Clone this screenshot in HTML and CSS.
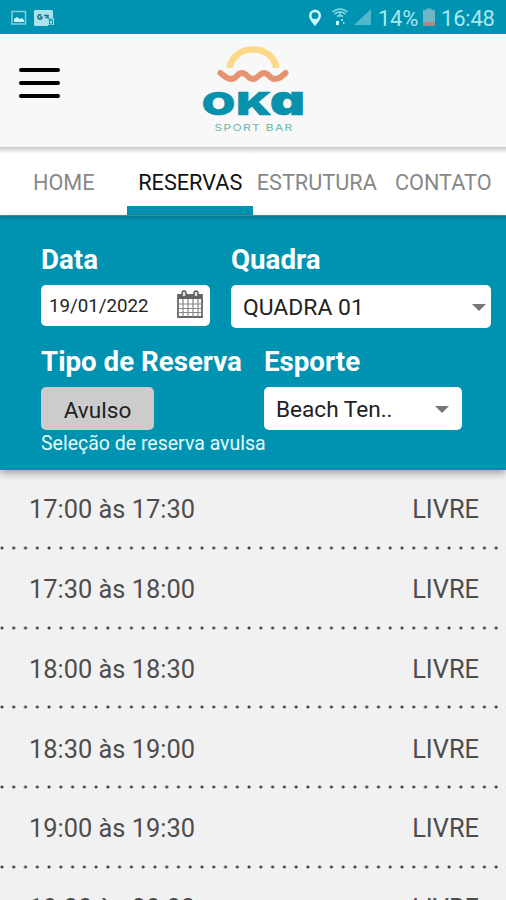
FILE: index.html
```
<!DOCTYPE html>
<html lang="pt-BR">
  <head>
    <meta charset="UTF-8">
    <meta name="viewport" content="width=device-width, initial-scale=1">
    <title>OKA Sport Bar - Reservas</title>
    <link rel="stylesheet" href="styles.css">
  </head>

  <body>
    <div class="status-bar">
      <svg class="status-left" width="60" height="34" viewBox="0 0 60 34">
        <rect x="12" y="11.5" width="13.5" height="12.5" fill="none" stroke="#7fd0dc" stroke-width="1.5"/>
        <path d="M14 22v-3l3-2 3 2 2-1 2 2v2z" fill="#c8f4f8"/>
        <path d="M35 10h17l1 1v7h1v7h-6v1H35l-1-1V11z" fill="#a9e3ec"/>
        <path d="M41.5 15.3a2.2 2.2 0 1 0 .3 3v-1.2h-2M44 15.5h4v2h-2.500" fill="none" stroke="#17718c" stroke-width="1.5"/>
        <path d="M48 19h5M49.500 20.500h3v3.500h-3z" fill="none" stroke="#0093b1" stroke-width="1"/>
      </svg>
      <svg class="status-right" width="68" height="34" viewBox="0 0 68 34">
        <path fill-rule="evenodd" d="M10 9.500a6 6 0 0 0-6 6c0 4.200 6 10.500 6 10.500s6-6.300 6-10.500a6 6 0 0 0-6-6zm0 2.800a3.400 3.400 0 1 1 0 6.800 3.400 3.400 0 0 1 0-6.800z" fill="#c8f8fc"/>
        <path d="M27.500 12q7.500-6 15 0M29.500 14q5.500-4 11 0M32 16.500q3-2 6 0" fill="none" stroke="#8cd9e3" stroke-width="1.600"/>
        <path d="M35 11v6" stroke="#8cd9e3" stroke-width="1.500"/>
        <path d="M31 21h3v4h-3z" fill="#c8f8fc"/>
        <path d="M36 19h2v2h-2zM38 22h1.500v2H38z" fill="#8cd9e3"/>
        <path d="M66 9v16H49z" fill="#4fb8cd"/>
      </svg>
      <span class="battery-value">14%</span>
      <svg class="battery" width="12" height="34" viewBox="0 0 12 34">
        <path d="M3.500 8.500h5V10H12v15.500H0V10h3.500z" fill="#70b7c5"/>
        <path d="M0 22h12v3.500H0z" fill="#b98580"/>
      </svg>
      <span class="clock">16:48</span>
    </div>

    <header class="header">
      <button class="menu-btn" aria-label="Menu">
        <span></span>
        <span></span>
        <span></span>
      </button>
      <svg class="logo" width="110" height="96" viewBox="198 42 110 96">
        <path d="M229.500 68c2-11 11-18.500 23.500-18.500S274.500 57 276.500 68" fill="none" stroke="#fcd988" stroke-width="6.500"/>
        <path d="M220.500 73c5 4 7 6 10.500 6 6 0 6-6 11-6s6 6 11 6 6-6 11-6 5 6 11 6c4 0 6-2 10.500-6" fill="none" stroke="#e59370" stroke-width="6" stroke-linecap="round"/>
        <g class="logo-name">
          <text x="202" y="115" textLength="33" lengthAdjust="spacingAndGlyphs">O</text>
          <text x="236.500" y="115" textLength="35" lengthAdjust="spacingAndGlyphs">K</text>
          <text class="logo-a" x="270" y="115" textLength="35" lengthAdjust="spacingAndGlyphs">a</text>
        </g>
        <text class="logo-sub" x="214.500" y="131" textLength="79" lengthAdjust="spacingAndGlyphs">SPORT BAR</text>
      </svg>
    </header>

    <nav class="tabs">
      <a>HOME</a>
      <a class="active">RESERVAS</a>
      <a>ESTRUTURA</a>
      <a>CONTATO</a>
    </nav>

    <form class="filtros">
      <div class="linha">
        <div class="campo campo-data">
          <label>Data</label>
          <div class="box box-data">
            <span>19/01/2022</span>
            <svg width="26" height="28" viewBox="0 0 26 28">
              <path d="M1 5h24v22H1z" fill="#fff" stroke="#666" stroke-width="1.800"/>
              <path d="M1 5h24v4H1z" fill="#666"/>
              <path d="M6 9v18M11 9v18M16 9v18M21 9v18M1 14h24M1 18.500h24M1 22.500h24" stroke="#888" stroke-width="1.200"/>
              <path d="M5 7V3q0-2 2-2t2 2v4zM17 7V3q0-2 2-2t2 2v4z" fill="#ddd" stroke="#555" stroke-width="1.300"/>
            </svg>
          </div>
        </div>
        <div class="campo campo-quadra">
          <label>Quadra</label>
          <div class="box box-quadra"><span>QUADRA 01</span><i class="seta"></i></div>
        </div>
      </div>
      <div class="linha linha-tipo">
        <div class="campo campo-tipo">
          <label>Tipo de Reserva</label>
          <div class="box box-tipo"><span>Avulso</span></div>
        </div>
        <div class="campo campo-esporte">
          <label>Esporte</label>
          <div class="box box-esporte"><span>Beach Ten..</span><i class="seta"></i></div>
        </div>
      </div>
      <p class="ajuda">Seleção de reserva avulsa</p>
    </form>

    <ul class="horarios">
      <li><span>17:00 às 17:30</span><span>LIVRE</span></li>
      <li><span>17:30 às 18:00</span><span>LIVRE</span></li>
      <li><span>18:00 às 18:30</span><span>LIVRE</span></li>
      <li><span>18:30 às 19:00</span><span>LIVRE</span></li>
      <li><span>19:00 às 19:30</span><span>LIVRE</span></li>
      <li><span>19:30 às 20:00</span><span>LIVRE</span></li>
    </ul>
  </body>
</html>
```
FILE: styles.css
```
* {
  box-sizing: border-box;
}

body {
  margin: 0;
  height: 900px;
  overflow: hidden;
  display: flex;
  flex-direction: column;
  background: #f1f1f1;
  font-family: Roboto, sans-serif;
}

.status-bar {
  flex: none;
  height: 34px;
  display: flex;
  align-items: center;
  background: #0093b1;
  color: #a5e8f0;
  font-size: 22px;
}

.status-right {
  margin-left: auto;
}

.battery-value {
  width: 45px;
  margin-left: 5px;
  padding-top: 3px;
  letter-spacing: -0.3px;
}

.clock {
  width: 61px;
  margin-left: 6px;
  margin-right: 4px;
  padding-top: 3px;
  letter-spacing: -0.2px;
}

.battery {
  flex: none;
}

.header {
  flex: none;
  height: 113px;
  display: grid;
  grid-template-columns: 1fr 110px 1fr;
  align-items: start;
  background: #f8f8f8;
}

.menu-btn {
  width: 41px;
  height: 30px;
  margin: 34px 0 0 19px;
  padding: 0;
  border: 0;
  background: none;
  display: flex;
  flex-direction: column;
  justify-content: space-between;
}

.menu-btn span {
  height: 4px;
  border-radius: 2px;
  background: #000;
}

.logo {
  margin-top: 8px;
}

.logo-name {
  font-family: Inter, sans-serif;
  font-size: 32px;
  font-weight: 900;
  fill: #0891ab;
  stroke: #0891ab;
  stroke-width: 0.700;
}

.logo-a {
  font-size: 42px;
  font-feature-settings: "cv11";
}

.logo-sub {
  font-family: Inter, sans-serif;
  font-size: 9px;
  letter-spacing: 1px;
  fill: #69b5b1;
}

.tabs {
  flex: none;
  height: 69px;
  display: grid;
  grid-template-columns: repeat(4, 1fr);
  background: linear-gradient(#c9c9c9, #e2e2e2 3px, #fff 7px);
  border-bottom: 1px solid #71868c;
}

.tabs a {
  padding: 23px 0 0 1px;
  border-bottom: 9px solid transparent;
  font-size: 21.700px;
  line-height: 26px;
  text-align: center;
  white-space: nowrap;
  color: #888;
}

.tabs .active {
  color: #111;
  border-bottom-color: #0093b1;
}

.filtros {
  flex: none;
  height: 254px;
  padding: 28px 15px 0 41px;
  background: linear-gradient(#087892, #0093b1 5px);
  box-shadow: 0 3px 8px rgba(0, 0, 0, 0.35);
  color: #fff;
}

.linha {
  display: flex;
  height: 102px;
}

.linha-tipo {
  height: 86px;
}

.campo-data {
  width: 190px;
}

.campo-quadra {
  width: 260px;
}

.campo-tipo {
  width: 223px;
}

.campo-esporte {
  width: 198px;
}

.campo label {
  display: block;
  height: 41px;
  font-size: 27.700px;
  font-weight: 700;
  line-height: 32px;
  white-space: nowrap;
}

.box {
  height: 43px;
  display: flex;
  align-items: center;
  justify-content: space-between;
  border-radius: 5px;
  background: #fff;
  color: #222;
  font-size: 22.600px;
}

.box-data {
  width: 169px;
  height: 41px;
  padding: 0 7px 3px 8px;
  font-size: 18.700px;
}

.box-data span {
  padding-top: 4px;
}

.box-quadra {
  padding: 2px 5px 0 12px;
  font-size: 22.900px;
}

.box-tipo {
  width: 113px;
  padding-top: 4px;
  justify-content: center;
  background: #ccc;
}

.box-esporte {
  padding: 2px 13px 0 12px;
}

.seta {
  border: 7px solid transparent;
  border-top-color: #777;
  border-bottom: 0;
}

.ajuda {
  margin: 0;
  font-size: 19.500px;
  line-height: 24px;
  color: #e3fbff;
}

.horarios {
  flex: none;
  margin: 0;
  padding: 0;
  list-style: none;
  font-size: 25.400px;
  color: #4d4d4d;
}

.horarios li {
  height: 79.750px;
  padding: 0 27px 1px 29px;
  display: flex;
  align-items: center;
  justify-content: space-between;
  background: radial-gradient(circle at 2px 2px, #444 1px, transparent 2px) 0 100% / 11.780px 4px repeat-x;
}
```
